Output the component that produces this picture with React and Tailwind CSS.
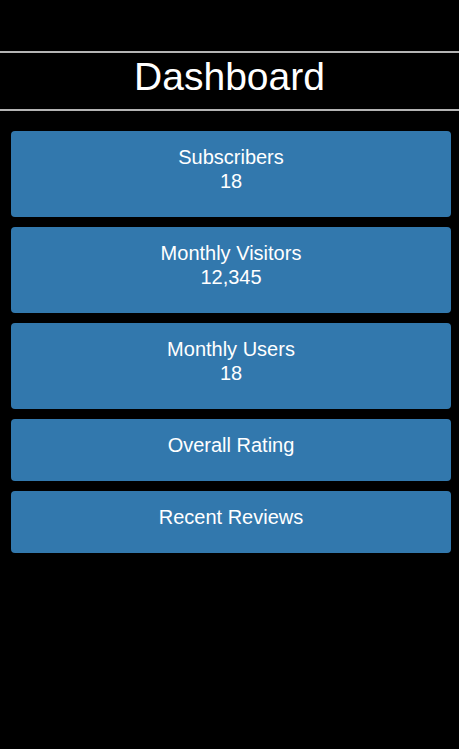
import React from 'react';

const stats = [
  { label: 'Subscribers', value: '18' },
  { label: 'Monthly Visitors', value: '12,345' },
  { label: 'Monthly Users', value: '18' },
  { label: 'Overall Rating' },
  { label: 'Recent Reviews' },
];

export default function App() {
  return (
    <div
      className="min-h-[749px] bg-black text-white"
      style={{ fontFamily: '"Liberation Sans", Arial, sans-serif' }}
    >
      <div className="h-[51px]" />
      <header className="border-y-2 border-[#b4b4b4] h-[60px] pt-[1px] text-center">
        <h1 className="text-[39px] leading-[45px]">Dashboard</h1>
      </header>

      <div className="flex flex-col gap-[10px] pl-[11px] pr-[8px] pt-[20px]">
        {stats.map((s) => (
          <div
            key={s.label}
            className="rounded-[4px] bg-[#3278ad] pt-[14px] pb-[24px] text-center text-[20px] leading-[24px]"
          >
            <div>{s.label}</div>
            {s.value && <div>{s.value}</div>}
          </div>
        ))}
      </div>
    </div>
  );
}
